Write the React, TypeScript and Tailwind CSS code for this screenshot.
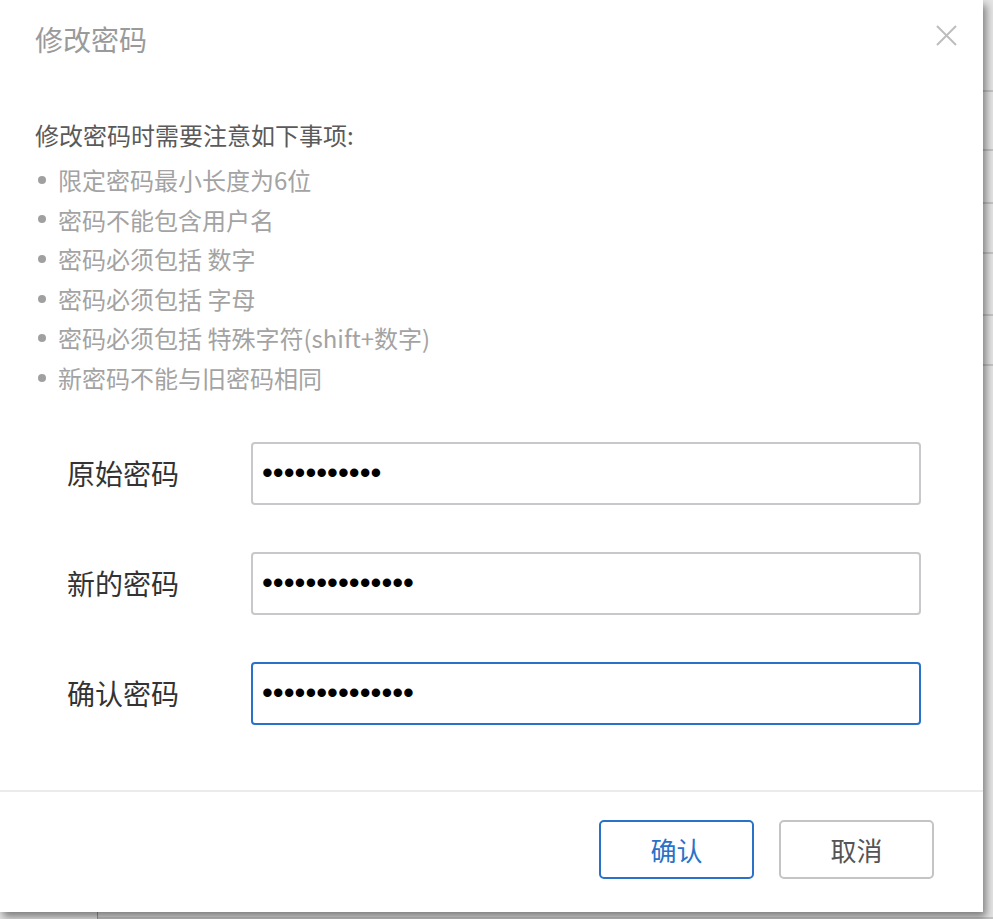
const cjk = { fontFamily: '"Noto Sans CJK SC", "Noto Sans", sans-serif' };

const rules = [
  '限定密码最小长度为6位',
  '密码不能包含用户名',
  '密码必须包括 数字',
  '密码必须包括 字母',
  '密码必须包括 特殊字符(shift+数字)',
  '新密码不能与旧密码相同',
];

const fields = [
  { label: '原始密码', value: 'abcdefghijk', focused: false },
  { label: '新的密码', value: 'abcdefghijklmn', focused: false },
  { label: '确认密码', value: 'abcdefghijklmn', focused: true },
];

// rows of the table that sits behind the dialog
const backdropRows = [92, 59, 53, 50, 62, 50, 553];

function CloseIcon() {
  return (
    <svg width="21" height="21" viewBox="0 0 21 21" fill="none" stroke="#bdbdbd" strokeWidth="2">
      <path d="M1 1 L20 20 M20 1 L1 20" />
    </svg>
  );
}

export default function App() {
  return (
    <div className="relative h-[919px] w-full overflow-hidden bg-[#e4e4e4]" style={cjk}>
      <div className="flex h-full">
        <div className="w-[98px] border-r border-[#9a9a9a]" />
        <div className="flex flex-1 flex-col">
          {backdropRows.map((h, i) => (
            <div key={i} className="border-b-2 border-[#c4c4c4]" style={{ height: h }} />
          ))}
        </div>
      </div>

      <div className="absolute left-0 top-0 flex h-[912px] w-[983px] flex-col bg-white shadow-[3px_5px_8px_rgba(0,0,0,0.45)]">
        <header className="flex items-start justify-between pl-[35px] pr-[26px] pt-5">
          <h2 className="text-[28px] leading-[39px] text-[#9a9a9a]">修改密码</h2>
          <button type="button" className="mt-[5px]" aria-label="关闭">
            <CloseIcon />
          </button>
        </header>

        <div className="pl-[35px] pt-[56px]">
          <p className="text-[24px] leading-[40px] text-[#5a5a5a]">修改密码时需要注意如下事项:</p>
          <ul className="mt-[5px]">
            {rules.map((r) => (
              <li key={r} className="flex items-center text-[24px] leading-[39.6px] text-[#a3a3a3]">
                <span className="ml-[3px] mr-[12px] h-[8px] w-[8px] rounded-full bg-[#a0a0a0]" />
                {r}
              </li>
            ))}
          </ul>
        </div>

        <form className="mt-[44px] flex flex-col gap-[47px] pl-[67px]">
          {fields.map((f) => (
            <div key={f.label} className="flex items-center">
              <label className="w-[184px] text-[28px] text-[#333]">{f.label}</label>
              <input
                type="password"
                readOnly
                defaultValue={f.value}
                className={
                  f.focused
                    ? 'h-[63px] w-[670px] rounded-[4px] border-2 border-[#2a72c8] pl-[9px] text-[31px] text-black outline-none'
                    : 'h-[63px] w-[670px] rounded-[4px] border-2 border-[#c8c8cc] pl-[9px] text-[31px] text-black outline-none'
                }
                style={{ fontFamily: '"Liberation Sans", Arial, sans-serif' }}
              />
            </div>
          ))}
        </form>

        <footer className="mt-auto flex justify-end gap-[25px] border-t-2 border-[#ebebeb] pb-[33px] pl-[3px] pr-[49px] pt-[28px]">
          <button
            type="button"
            className="h-[59px] w-[155px] rounded-[5px] border-2 border-[#2a72c8] bg-white text-[26px] text-[#2a72c8]"
          >
            确认
          </button>
          <button
            type="button"
            className="h-[59px] w-[155px] rounded-[5px] border-2 border-[#c4c4c4] bg-white text-[26px] text-[#555]"
          >
            取消
          </button>
        </footer>
      </div>
    </div>
  );
}
